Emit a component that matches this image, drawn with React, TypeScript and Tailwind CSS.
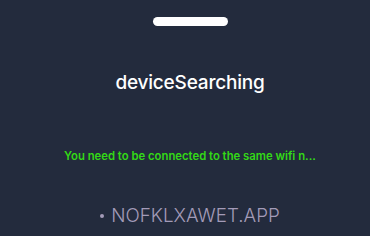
export default function App() {
  return (
    <div
      className="w-[370px] h-[236px] bg-[#232b3d] flex flex-col items-center overflow-hidden pl-[10px]"
      style={{ fontFamily: "Inter, 'Liberation Sans', sans-serif" }}
    >
      <div className="mt-[17px] w-[75px] h-[9px] rounded-full bg-white" />
      <h1 className="mt-[44px] text-[19px] leading-[26px] font-medium tracking-[-0.2px] text-white">deviceSearching</h1>
      <p className="mt-[52px] text-[11.3px] leading-[16px] font-semibold text-[#33d916]">
        You need to be connected to the same wifi n...
      </p>
      <div className="mt-[39px] text-[18.8px] leading-[26px] font-light text-[#a39bb8] flex items-center gap-[7px]">
        <span className="w-[4px] h-[4px] rounded-full bg-[#a39bb8]" />
        <span>NOFKLXAWET.APP</span>
      </div>
    </div>
  );
}
